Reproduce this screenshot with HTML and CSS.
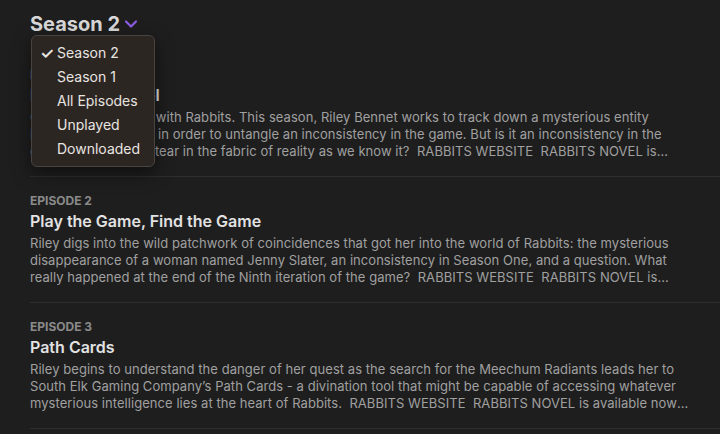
FILE: index.html
```html
<!DOCTYPE html>
<html>
<head>
    <title>Rabbits - Episodes</title>
    <link rel="stylesheet" href="styles.css">
</head>
<body>
    <div class="page">
        <div class="season-picker">
            <h1 class="season-title">Season 2</h1>
            <svg class="chevron" width="14" height="10" viewBox="0 0 14 10">
                <path d="M2 2.5 L7 7.5 L12 2.5" fill="none" stroke="#8d5ce6" stroke-width="2.2" stroke-linecap="round" stroke-linejoin="round"/>
            </svg>

            <ul class="season-menu">
                <li class="checked"><span class="check">&#10003;</span>Season 2</li>
                <li>Season 1</li>
                <li>All Episodes</li>
                <li>Unplayed</li>
                <li>Downloaded</li>
            </ul>
        </div>

        <div class="episodes">
            <div class="episode">
                <div class="ep-num">Episode 1</div>
                <div class="ep-title">Down the Tunnel</div>
                <p class="ep-desc">Our story continues with Rabbits. This season, Riley Bennet works to track down a mysterious entity known as the Player in order to untangle an inconsistency in the game. But is it an inconsistency in the game, or a possible tear in the fabric of reality as we know it?&nbsp; RABBITS WEBSITE&nbsp; RABBITS NOVEL is available now! Order your copy today.</p>
            </div>
            <div class="episode">
                <div class="ep-num">Episode 2</div>
                <div class="ep-title">Play the Game, Find the Game</div>
                <p class="ep-desc">Riley digs into the wild patchwork of coincidences that got her into the world of Rabbits: the mysterious disappearance of a woman named Jenny Slater, an inconsistency in Season One, and a question. What really happened at the end of the Ninth iteration of the game?&nbsp; RABBITS WEBSITE&nbsp; RABBITS NOVEL is available now! Order your copy today.</p>
            </div>
            <div class="episode">
                <div class="ep-num">Episode 3</div>
                <div class="ep-title">Path Cards</div>
                <p class="ep-desc">Riley begins to understand the danger of her quest as the search for the Meechum Radiants leads her to South Elk Gaming Company&rsquo;s Path Cards - a divination tool that might be capable of accessing whatever mysterious intelligence lies at the heart of Rabbits.&nbsp; RABBITS WEBSITE&nbsp; RABBITS NOVEL is available now! Order your copy today.</p>
            </div>
        </div>
    </div>
</body>
</html>
```

FILE: styles.css
```css
*{
    margin: 0;
    padding: 0;
    box-sizing: border-box;
}
body{
    background-color: #1e1e1e;
    font-family: Inter, "Liberation Sans", sans-serif;
    color: #e6e6e6;
    overflow: hidden;
}
.page{
    padding-left: 30px;
}
.season-picker{
    position: relative;
    display: flex;
    align-items: center;
    gap: 4px;
    height: 51px;
    padding-bottom: 4px;
}
.season-title{
    font-size: 20px;
    font-weight: 700;
    color: #d8d8d8;
}
.chevron{
    margin-top: 1px;
}

/* popup menu sits over the first episode */
.season-menu{
    position: absolute;
    left: 1px;
    top: 35px;
    width: 124px;
    padding: 5px 0;
    list-style: none;
    background-color: #2c2623;
    border: 1px solid #4a4440;
    border-radius: 6px;
    box-shadow: 0 6px 18px rgba(0,0,0,0.5);
    z-index: 2;
}
.season-menu li{
    position: relative;
    height: 24px;
    line-height: 24px;
    padding-left: 25px;
    font-size: 14px;
    color: #e8e4e0;
}
.check{
    position: absolute;
    left: 8px;
    font-size: 16px;
    font-weight: 600;
}

.episode{
    padding: 17px 30px 16px 0;
    border-bottom: 1px solid #2e2e2e;
}
.ep-num{
    font-size: 12px;
    line-height: 14px;
    font-weight: 700;
    text-transform: uppercase;
    color: #8a8a8a;
}
.ep-title{
    margin-top: 3px;
    font-size: 16px;
    line-height: 20px;
    font-weight: 600;
    color: #e2e2e2;
}
.ep-desc{
    margin-top: 4px;
    font-size: 13px;
    line-height: 17px;
    letter-spacing: 0.05px;
    color: #a0a0a0;
    display: -webkit-box;
    -webkit-line-clamp: 3;
    -webkit-box-orient: vertical;
    overflow: hidden;
}
```
